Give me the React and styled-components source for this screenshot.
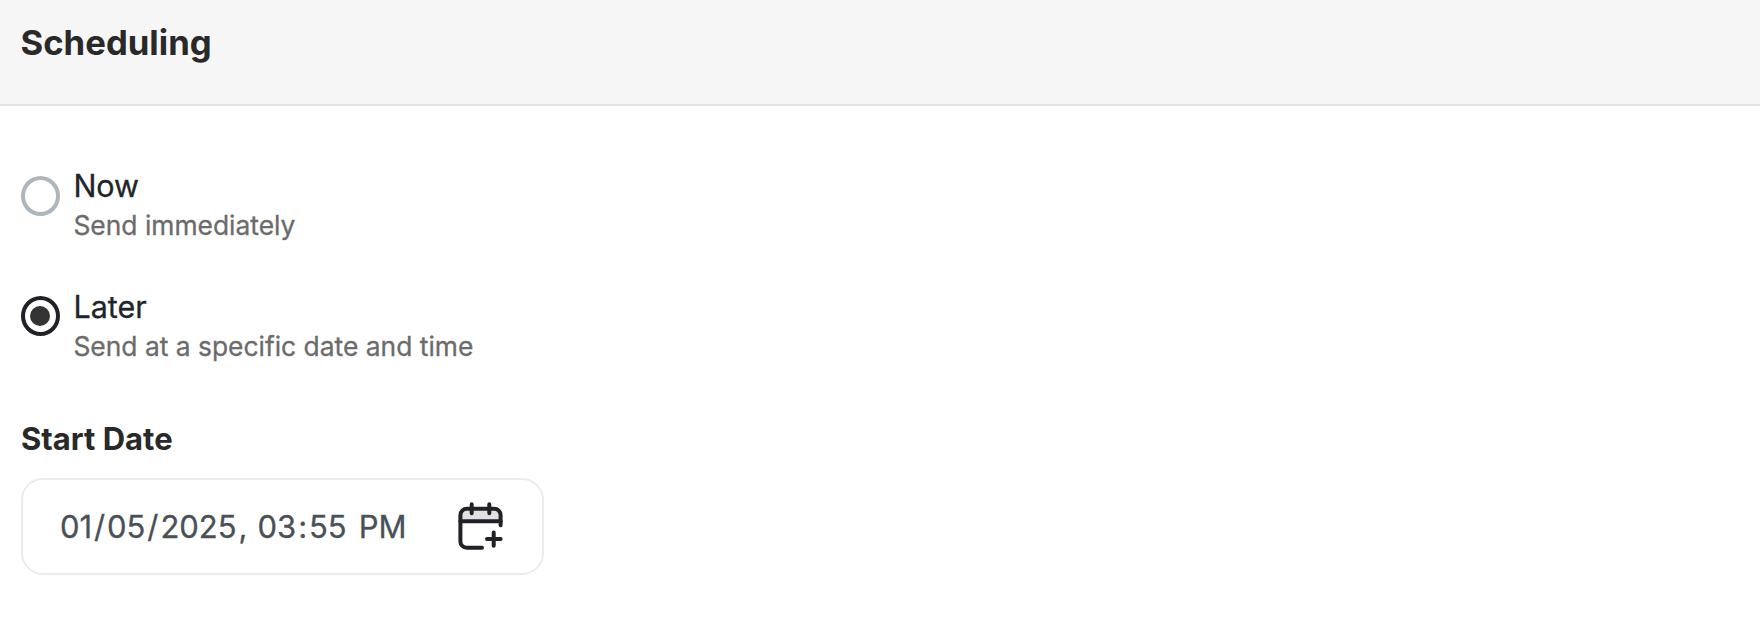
import { useState } from 'react';
import styled, { createGlobalStyle } from 'styled-components';

const GlobalStyle = createGlobalStyle`
    body{
        margin:0;
        background-color:#fff;
        font-family: Inter, sans-serif;
    }
`;

const Page = styled.div`
    width:100%;
    min-height:630px;
    background-color:#fff;
`;

const Header = styled.header`
    box-sizing:border-box;
    height:106px;
    padding:20px 20.5px 0;
    background-color:#f6f6f6;
    border-bottom:2px solid #e4e4e4;
`;

const Title = styled.h1`
    margin:0;
    font-size:34.7px;
    line-height:44px;
    font-weight:700;
    color:#292929;
`;

const Body = styled.main`
    display:flex;
    flex-direction:column;
    align-items:flex-start;
    padding:64px 21px 0;
`;

const Option = styled.div`
    display:flex;
    height:120.6px;
    cursor:pointer;
`;

const Radio = styled.div`
    box-sizing:border-box;
    display:flex;
    align-items:center;
    justify-content:center;
    width:39px;
    height:40px;
    margin:5.6px 13.4px 0 0;
    border:4px solid ${({$checked})=>$checked ? '#212129' : '#adb5bd'};
    border-radius:50%;
`;

const Dot = styled.div`
    width:20px;
    height:20px;
    margin-right:1px;
    border-radius:50%;
    background-color:#333;
`;

const OptionText = styled.div`
    margin-top:-2px;
    -webkit-text-stroke:0.3px;
`;

const OptionLabel = styled.div`
    font-size:30.5px;
    line-height:35px;
    color:#212529;
`;

const OptionHint = styled.div`
    margin-top:4px;
    font-size:26.4px;
    line-height:36px;
    color:#6b6b6b;
`;

const FieldLabel = styled.label`
    margin-top:5.8px;
    font-size:31px;
    line-height:43px;
    font-weight:700;
    color:#292929;
`;

const DateField = styled.div`
    box-sizing:border-box;
    display:flex;
    align-items:center;
    justify-content:space-between;
    width:523px;
    height:97px;
    margin-top:18px;
    padding:0 36px 0 35px;
    border:2px solid #ebebeb;
    border-radius:22px;

    & > svg{
        margin-bottom:1px;
    }
`;

const DateValue = styled.div`
    margin-top:1px;
    font-size:31px;
    line-height:38px;
    word-spacing:-0.5px;
    white-space:pre;
    color:#495057;
    -webkit-text-stroke:0.3px;
`;

const DatePart = styled.span`
    padding:0 1.9px;
`;

const CalendarIcon = ()=>(
    <svg width="50" height="50" viewBox="0 0 50 50" fill="none" stroke="#212129" strokeWidth="4" strokeLinecap="round" strokeLinejoin="round">
        <path d="M4.4 20.3V14a6.3 6.3 0 0 1 6.3-6.3h27.6a6.3 6.3 0 0 1 6.3 6.3v6.3z" fill="#e1e1e1" stroke="none" />
        <path d="M26 46.7H10.7a6.3 6.3 0 0 1-6.3-6.3V14a6.3 6.3 0 0 1 6.3-6.3h27.6a6.3 6.3 0 0 1 6.3 6.3v10.3" />
        <path d="M4.4 20.3h40.2" />
        <path d="M15.7 3.3v9M33.3 3.3v9" />
        <path d="M31 38h13.6M37.7 31.6v13.2" />
    </svg>
);

const options = [
    {id:'now', label:'Now', hint:'Send immediately'},
    {id:'later', label:'Later', hint:'Send at a specific date and time'},
];

const App = ()=>{
    const [selected, setSelected] = useState('later');

    return (<>
        <GlobalStyle />
        <Page>
            <Header>
                <Title>Scheduling</Title>
            </Header>
            <Body>
                {options.map((each)=>(
                    <Option key={each.id} onClick={()=>setSelected(each.id)}>
                        <Radio $checked={selected === each.id}>
                            {selected === each.id&&<Dot />}
                        </Radio>
                        <OptionText>
                            <OptionLabel>{each.label}</OptionLabel>
                            <OptionHint>{each.hint}</OptionHint>
                        </OptionText>
                    </Option>
                ))}
                <FieldLabel>Start Date</FieldLabel>
                <DateField>
                    <DateValue>
                        <DatePart>01</DatePart>/<DatePart>05</DatePart>/<DatePart>2025</DatePart>{', '}
                        <DatePart>03</DatePart>:<DatePart>55</DatePart>{' '}
                        <DatePart>PM</DatePart>
                    </DateValue>
                    <CalendarIcon />
                </DateField>
            </Body>
        </Page>
    </>)
}

export default App;
